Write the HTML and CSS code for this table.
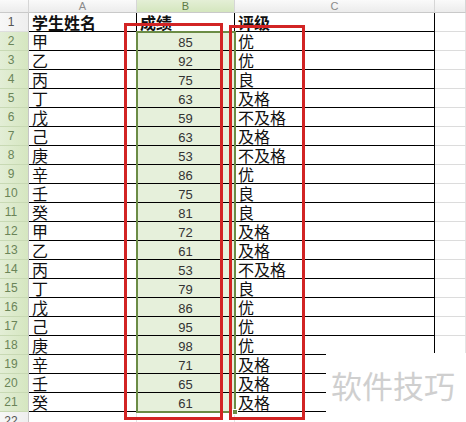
FILE: index.html
```html
<!DOCTYPE html>
<html lang="zh-CN">
<head>
<meta charset="utf-8">
<title>成绩表</title>
<link rel="stylesheet" href="styles.css">
</head>
<body>
<div class="sheet">
  <div class="row head">
    <div class="hc corner"></div>
    <div class="hc">A</div>
    <div class="hc sel">B</div>
    <div class="hc">C</div>
    <div class="hc"></div>
  </div>
  <div class="row">
    <div class="rn">1</div>
    <div class="c t b">学生姓名</div>
    <div class="c t b">成绩</div>
    <div class="c t b">评级</div>
    <div class="g"></div>
  </div>
  <div class="row"><div class="rn on">2</div><div class="c t">甲</div><div class="c n">85</div><div class="c t">优</div><div class="g"></div></div>
  <div class="row"><div class="rn on">3</div><div class="c t">乙</div><div class="c n">92</div><div class="c t">优</div><div class="g"></div></div>
  <div class="row"><div class="rn on">4</div><div class="c t">丙</div><div class="c n">75</div><div class="c t">良</div><div class="g"></div></div>
  <div class="row"><div class="rn on">5</div><div class="c t">丁</div><div class="c n">63</div><div class="c t">及格</div><div class="g"></div></div>
  <div class="row"><div class="rn on">6</div><div class="c t">戊</div><div class="c n">59</div><div class="c t">不及格</div><div class="g"></div></div>
  <div class="row"><div class="rn on">7</div><div class="c t">己</div><div class="c n">63</div><div class="c t">及格</div><div class="g"></div></div>
  <div class="row"><div class="rn on">8</div><div class="c t">庚</div><div class="c n">53</div><div class="c t">不及格</div><div class="g"></div></div>
  <div class="row"><div class="rn on">9</div><div class="c t">辛</div><div class="c n">86</div><div class="c t">优</div><div class="g"></div></div>
  <div class="row"><div class="rn on">10</div><div class="c t">壬</div><div class="c n">75</div><div class="c t">良</div><div class="g"></div></div>
  <div class="row"><div class="rn on">11</div><div class="c t">癸</div><div class="c n">81</div><div class="c t">良</div><div class="g"></div></div>
  <div class="row"><div class="rn on">12</div><div class="c t">甲</div><div class="c n">72</div><div class="c t">及格</div><div class="g"></div></div>
  <div class="row"><div class="rn on">13</div><div class="c t">乙</div><div class="c n">61</div><div class="c t">及格</div><div class="g"></div></div>
  <div class="row"><div class="rn on">14</div><div class="c t">丙</div><div class="c n">53</div><div class="c t">不及格</div><div class="g"></div></div>
  <div class="row"><div class="rn on">15</div><div class="c t">丁</div><div class="c n">79</div><div class="c t">良</div><div class="g"></div></div>
  <div class="row"><div class="rn on">16</div><div class="c t">戊</div><div class="c n">86</div><div class="c t">优</div><div class="g"></div></div>
  <div class="row"><div class="rn on">17</div><div class="c t">己</div><div class="c n">95</div><div class="c t">优</div><div class="g"></div></div>
  <div class="row"><div class="rn on">18</div><div class="c t">庚</div><div class="c n">98</div><div class="c t">优</div><div class="g"></div></div>
  <div class="row"><div class="rn on">19</div><div class="c t">辛</div><div class="c n">71</div><div class="c t">及格</div><div class="g"></div></div>
  <div class="row"><div class="rn on">20</div><div class="c t">壬</div><div class="c n">65</div><div class="c t">及格</div><div class="g"></div></div>
  <div class="row"><div class="rn on">21</div><div class="c t">癸</div><div class="c n">61</div><div class="c t">及格</div><div class="g"></div></div>
  <div class="row"><div class="rn">22</div><div class="g"></div><div class="g"></div><div class="g"></div><div class="g"></div></div>

  <div class="selection"><span class="handle"></span></div>
  <div class="mark mark-b"></div>
  <div class="mark mark-c"></div>
  <div class="watermark">软件技巧</div>
</div>
</body>
</html>
```

FILE: styles.css
```css
html, body {
  margin: 0;
  padding: 0;
  background: #ffffff;
}

.sheet {
  position: relative;
  width: 466px;
  height: 422px;
  overflow: hidden;
  background: #ffffff;
  font-family: "Noto Sans CJK SC", "Liberation Sans", sans-serif;
}

.row {
  display: grid;
  grid-template-columns: 29px 108px 98px 200px 1fr;
  height: 19px;
}

.row.head {
  height: 13px;
}

.hc {
  box-sizing: border-box;
  height: 13px;
  background: linear-gradient(#fafafa, #ececec);
  border-bottom: 1px solid #c9c9c9;
  border-right: 1px solid #d6d6d6;
  font-family: "Liberation Sans", sans-serif;
  font-size: 11px;
  line-height: 12px;
  color: #8a8a8a;
  text-align: center;
}

.hc.sel {
  background: linear-gradient(#e4efd6, #d4e6be);
  color: #5d7a45;
}

.rn {
  box-sizing: border-box;
  height: 19px;
  background: linear-gradient(90deg, #f7f7f7, #eeeeee);
  border-right: 1px solid #c6c6c6;
  border-bottom: 1px solid #dedede;
  font-family: "Liberation Sans", sans-serif;
  font-size: 12px;
  line-height: 19px;
  color: #555555;
  text-align: center;
  padding-right: 6px;
}

.rn.on {
  background: linear-gradient(90deg, #e3eed6, #d5e6c0);
  border-bottom-color: #c8d9b4;
  color: #6a8458;
}

.c {
  box-sizing: border-box;
  height: 19px;
  border-bottom: 1px solid #000000;
  white-space: nowrap;
}

.c.t {
  font-size: 16px;
  line-height: 18px;
  color: #111111;
  padding-left: 3px;
}

.c.b {
  font-weight: bold;
}

.c.n {
  background: #e6f0db;
  font-family: "Liberation Sans", sans-serif;
  font-size: 13px;
  line-height: 17px;
  padding-top: 2px;
  color: #333333;
  text-align: center;
}

.row > .c:nth-child(2),
.row > .c:nth-child(3),
.row > .c:nth-child(4) {
  border-right: 1px solid #000000;
}

.g {
  box-sizing: border-box;
  height: 19px;
  border-bottom: 1px solid #dcdcdc;
  border-right: 1px solid #e4e4e4;
}

.selection {
  position: absolute;
  left: 136px;
  top: 31px;
  width: 100px;
  height: 382px;
  box-sizing: border-box;
  border: 2px solid #6b8c45;
}

.handle {
  position: absolute;
  right: -4px;
  bottom: -4px;
  width: 4px;
  height: 4px;
  background: #6b8c45;
  border: 1px solid #ffffff;
}

.mark {
  position: absolute;
  box-sizing: border-box;
  border: 3px solid #d22424;
}

.mark-b {
  left: 124px;
  top: 23px;
  width: 99px;
  height: 397px;
}

.mark-c {
  left: 229px;
  top: 25px;
  width: 76px;
  height: 395px;
}

.watermark {
  position: absolute;
  left: 326px;
  top: 353px;
  width: 140px;
  height: 69px;
  background: #ffffff;
  box-sizing: border-box;
  padding-top: 12px;
  padding-left: 5px;
  font-family: "Noto Sans CJK SC", sans-serif;
  font-size: 31px;
  line-height: 40px;
  color: #cfcfcf;
  white-space: nowrap;
}
```
